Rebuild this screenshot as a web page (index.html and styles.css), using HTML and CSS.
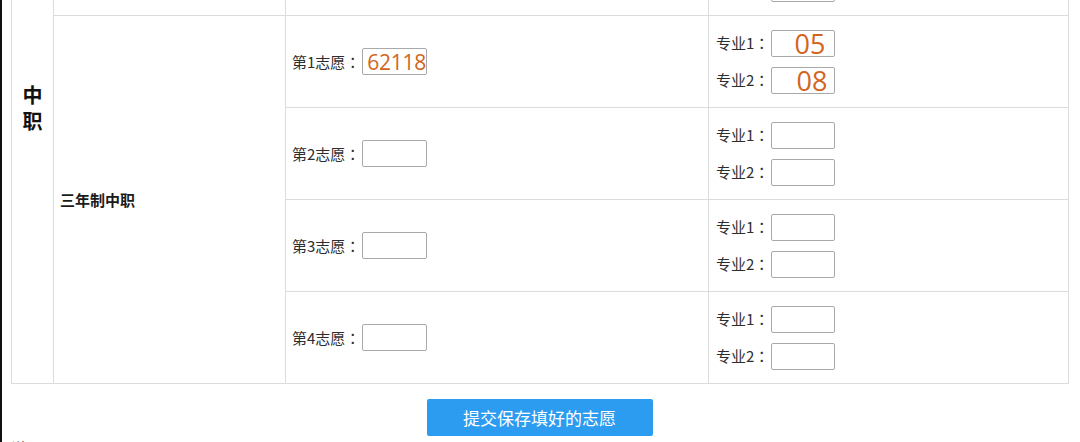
FILE: index.html
```html
<!DOCTYPE html>
<html lang="zh-CN">
<head>
<meta charset="utf-8">
<title>志愿填报</title>
<link rel="stylesheet" href="styles.css">
</head>
<body>
<div class="page">
  <div class="inner">
    <table class="form">
      <colgroup>
        <col class="c1"><col class="c2"><col class="c3"><col class="c4">
      </colgroup>
      <tr>
        <td class="cat" rowspan="6"><span class="cat-text">中<br>职</span></td>
        <td class="type" rowspan="2">五年一贯制</td>
        <td><div class="field"><label>第1志愿<span class="colon" lang="zh-TW">：</span></label><input class="box" type="text"></div></td>
        <td><div class="pair"><div class="field"><label>专业1<span class="colon" lang="zh-TW">：</span></label><input class="box" type="text"></div><div class="field"><label>专业2<span class="colon" lang="zh-TW">：</span></label><input class="box" type="text"></div></div></td>
      </tr>
      <tr>
        <td><div class="field"><label>第2志愿<span class="colon" lang="zh-TW">：</span></label><input class="box" type="text"></div></td>
        <td><div class="pair"><div class="field"><label>专业1<span class="colon" lang="zh-TW">：</span></label><input class="box" type="text"></div><div class="field"><label>专业2<span class="colon" lang="zh-TW">：</span></label><input class="box" type="text"></div></div></td>
      </tr>
      <tr>
        <td class="type" rowspan="4">三年制中职</td>
        <td><div class="field"><label>第1志愿<span class="colon" lang="zh-TW">：</span></label><input class="box filled code" type="text" value="62118"></div></td>
        <td><div class="pair"><div class="field"><label>专业1<span class="colon" lang="zh-TW">：</span></label><input class="box filled major" type="text" value="05"></div><div class="field"><label>专业2<span class="colon" lang="zh-TW">：</span></label><input class="box filled major m2" type="text" value="08"></div></div></td>
      </tr>
      <tr>
        <td><div class="field"><label>第2志愿<span class="colon" lang="zh-TW">：</span></label><input class="box" type="text"></div></td>
        <td><div class="pair"><div class="field"><label>专业1<span class="colon" lang="zh-TW">：</span></label><input class="box" type="text"></div><div class="field"><label>专业2<span class="colon" lang="zh-TW">：</span></label><input class="box" type="text"></div></div></td>
      </tr>
      <tr>
        <td><div class="field"><label>第3志愿<span class="colon" lang="zh-TW">：</span></label><input class="box" type="text"></div></td>
        <td><div class="pair"><div class="field"><label>专业1<span class="colon" lang="zh-TW">：</span></label><input class="box" type="text"></div><div class="field"><label>专业2<span class="colon" lang="zh-TW">：</span></label><input class="box" type="text"></div></div></td>
      </tr>
      <tr>
        <td><div class="field"><label>第4志愿<span class="colon" lang="zh-TW">：</span></label><input class="box" type="text"></div></td>
        <td><div class="pair"><div class="field"><label>专业1<span class="colon" lang="zh-TW">：</span></label><input class="box" type="text"></div><div class="field"><label>专业2<span class="colon" lang="zh-TW">：</span></label><input class="box" type="text"></div></div></td>
      </tr>
    </table>
    <button class="submit" type="button">提交保存填好的志愿</button>
    <p class="note">说明：</p>
  </div>
</div>
</body>
</html>
```

FILE: styles.css
```css
html, body {
  margin: 0;
  padding: 0;
  background: #fff;
}
body {
  font-family: "Noto Sans CJK SC", "Noto Sans", sans-serif;
  color: #333;
  overflow: hidden;
}
.page {
  border-left: 2px solid #111;
  height: 442px;
  padding-left: 9px;
  box-sizing: border-box;
  overflow: hidden;
}
.inner {
  width: 1057px;
}
.form {
  border-collapse: collapse;
  table-layout: fixed;
  width: 1057px;
  margin-top: -169px;
}
.c1 { width: 42px; }
.c2 { width: 232px; }
.c3 { width: 423px; }
.c4 { width: 360px; }
.form td {
  border: 1px solid #dcdcdc;
  height: 91px;
  padding: 0 0 0 6px;
  vertical-align: middle;
  font-size: 15px;
  line-height: 20px;
}
.form td.cat {
  padding: 0;
  text-align: center;
}
.cat-text {
  display: inline-block;
  font-size: 20px;
  line-height: 26px;
  font-weight: bold;
  color: #111;
}
.form td.type {
  padding-left: 6px;
  font-weight: bold;
  color: #1a1a1a;
}
.field {
  display: flex;
  align-items: center;
}
.field label {
  white-space: nowrap;
  color: #2e2e2e;
}
.colon {
  font-family: "Noto Sans CJK TC", "Noto Sans CJK SC", sans-serif;
}
.pair {
  display: flex;
  flex-direction: column;
  gap: 10px;
  padding-left: 1px;
}
.box {
  width: 65px;
  height: 27px;
  box-sizing: border-box;
  border: 1px solid #a9a9a9;
  border-radius: 2px;
  margin: 0 0 0 2px;
  padding: 0;
  background: #fff;
  font-family: "Open Sans", sans-serif;
  outline: none;
}
.pair .box {
  width: 64px;
}
.filled {
  color: #d2651e;
}
.code {
  font-size: 21px;
  padding-left: 4px;
  letter-spacing: -0.3px;
}
.major {
  font-size: 27px;
  text-align: right;
  padding-right: 9px;
}
.m2 {
  padding-right: 7px;
}
.submit {
  display: block;
  margin: 15px auto 0;
  width: 226px;
  height: 37px;
  border: none;
  border-radius: 2px;
  background: #2b9cf0;
  color: #fff;
  font-family: "Noto Sans CJK SC", sans-serif;
  font-size: 17px;
  padding: 0;
}
.note {
  margin: 2px 0 0 0;
  font-size: 15px;
  line-height: 20px;
  color: #333;
}
```
